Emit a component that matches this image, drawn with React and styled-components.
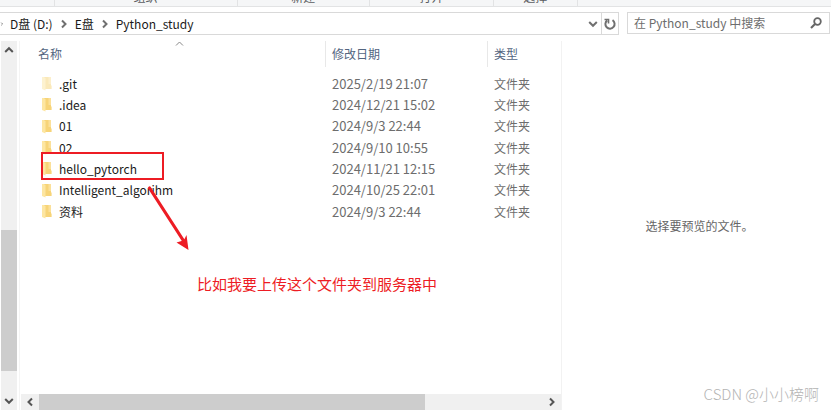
import React from 'react';
import styled, { createGlobalStyle } from 'styled-components';

const GlobalStyle = createGlobalStyle`
    * {
        box-sizing: border-box;
    }
    body {
        margin: 0;
        background: #fff;
        color: #1a1a1a;
        font-family: "Noto Sans CJK SC", "Noto Sans", sans-serif;
        font-size: 12px;
        line-height: 20px;
    }
    button, input {
        font: inherit;
        color: inherit;
        background: none;
        border: 0;
        padding: 0;
        margin: 0;
    }
`;

const Janela = styled.div`
    display: flex;
    flex-direction: column;
    height: 100vh;
    overflow: hidden;
    position: relative;
`;

const Ribbon = styled.div`
    display: flex;
    align-items: flex-end;
    height: 7px;
    flex: none;
    overflow: hidden;
    background: #f5f6f7;
    border-bottom: 1px solid #e2e3e4;
`;

const RibbonGrupo = styled.div`
    flex: ${props => props.$peso} 1 0;
    height: 18px;
    border-right: 1px solid #e2e3e4;
    color: #5a5d61;
    line-height: 18px;
    text-align: center;

    &:last-child {
        border-right: 0;
    }
`;

const BarraEndereco = styled.div`
    display: flex;
    flex: none;
    gap: 8px;
    padding: 5px 1px 6px 0;
`;

const Endereco = styled.nav`
    display: flex;
    align-items: center;
    flex: 1;
    height: 23px;
    border: 1px solid #d9d9d9;
    border-left: 0;
`;

const Pasta = styled.button`
    padding: 0 6px;
    white-space: nowrap;
`;

const BotaoSeta = styled.button`
    display: flex;
    align-items: center;
    justify-content: center;
    width: ${props => props.$largura}px;
    height: 21px;
    margin-left: ${props => (props.$fim ? 'auto' : 0)};
    border-left: ${props => (props.$borda ? '1px solid #d9d9d9' : '0')};
    color: #707070;
`;

const Busca = styled.label`
    display: flex;
    align-items: center;
    width: 203px;
    height: 22px;
    padding: 0 7px 0 6px;
    border: 1px solid #d9d9d9;
    color: #666;

    input {
        flex: 1;
        min-width: 0;
        outline: none;
    }
    input::placeholder {
        color: #6d6d6d;
        opacity: 1;
    }
`;

const Corpo = styled.div`
    display: flex;
    flex: 1;
    min-height: 0;
`;

const LateralRolagem = styled.div`
    display: flex;
    flex: none;
    width: 20px;
    padding: 0 3px 0 1px;
    border-right: 1px solid #f4f4f4;
`;

const Rolagem = styled.div`
    display: flex;
    flex: 1;
    flex-direction: ${props => (props.$vertical ? 'column' : 'row')};
    background: #f0f0f0;
`;

const BotaoRolagem = styled.button`
    display: flex;
    align-items: center;
    justify-content: center;
    flex: none;
    width: ${props => (props.$vertical ? '16px' : '18px')};
    height: ${props => (props.$vertical ? '18px' : '16px')};
    color: #555;
`;

const Trilho = styled.div`
    flex: ${props => props.$peso} 1 0;
    background: ${props => (props.$ativo ? '#cdcdcd' : 'transparent')};
`;

const PainelArquivos = styled.main`
    position: relative;
    display: flex;
    flex-direction: column;
    justify-content: space-between;
    flex: 540 1 0;
    padding-left: 1px;
    border-right: 1px solid #f2f2f2;
`;

const RodapeRolagem = styled.div`
    display: flex;
    height: 16px;
`;

const Tabela = styled.table`
    width: 100%;
    table-layout: fixed;
    border-collapse: separate;
    border-spacing: 0;

    th, td {
        padding: 0 0 0 6px;
        text-align: left;
        font-weight: normal;
        white-space: nowrap;
    }
    th:first-child {
        padding-left: 17px;
    }
    td:first-child {
        padding-left: 21px;
    }
    tbody::before {
        content: '';
        display: block;
        height: 6px;
    }
`;

const Coluna = styled.th`
    position: relative;
    width: ${props => props.$largura};
    height: 26px;
    border-right: ${props => (props.$ultima ? '0' : '1px solid #e8e8e8')};
    color: #53657f;
`;

const Ordem = styled.svg`
    position: absolute;
    top: 0;
    left: 50%;
    margin-left: 2px;
`;

const Linha = styled.tr`
    height: 21px;
    color: #6d6d6d;

    &:nth-child(3n) {
        height: 22px;
    }
`;

const Nome = styled.div`
    display: flex;
    align-items: center;
    gap: 7px;
    color: #1a1a1a;
`;

const Data = styled.td`
    font-size: 13px;
`;

const Previa = styled.aside`
    display: flex;
    flex: 263 1 0;
    align-items: center;
    justify-content: center;
    padding-left: 6px;
    color: #666;
`;

const Destaque = styled.div`
    position: absolute;
    top: 111px;
    left: 21px;
    width: 123px;
    height: 28px;
    border: 2px solid #ed1c24;
`;

const Flecha = styled.svg`
    position: absolute;
    top: 144px;
    left: 126px;
`;

const Recado = styled.p`
    position: absolute;
    top: 233px;
    left: 177px;
    margin: 0;
    color: #ed1c24;
    font-size: 15px;
    white-space: nowrap;
`;

const Marca = styled.div`
    position: absolute;
    right: 12px;
    bottom: 6px;
    color: #b4b4b4;
    font-size: 15px;
    font-weight: 300;
    white-space: pre;
`;

const direcoes = {
    direita: 'M3 1.5 L6.5 5 L3 8.5',
    esquerda: 'M7 1.5 L3.5 5 L7 8.5',
    cima: 'M1.2 7 L5 3.2 L8.8 7',
    baixo: 'M1.2 3 L5 6.8 L8.8 3'
};

const Seta = ({ para }) => (
    <svg width="10" height="10" viewBox="0 0 10 10" fill="none" stroke="currentColor" strokeWidth="2" aria-hidden="true">
        <path d={direcoes[para]} />
    </svg>
);

const IconePasta = ({ oculta }) => (
    <svg width="10" height="15" viewBox="0 0 10 15" opacity={oculta ? 0.5 : 1} aria-hidden="true">
        <path d="M1.5 1 H9 V9 L9.6 10 V13 H1.5 Z" fill="#f7d478" />
        <path d="M6.5 1 H9 V8 H6.5 Z" fill="#fbe09a" />
        <path d="M0 1 H2 L3.5 2.5 V14.5 L0 13 Z" fill="#fde6a2" />
    </svg>
);

const grupos = [
    { nome: '', peso: 54 },
    { nome: '组织', peso: 183 },
    { nome: '新建', peso: 132 },
    { nome: '打开', peso: 124 },
    { nome: '选择', peso: 83 },
    { nome: '', peso: 255 }
];

const caminho = ['D盘 (D:)', 'E盘', 'Python_study'];

const arquivos = [
    { nome: '.git', data: '2025/2/19 21:07', oculta: true },
    { nome: '.idea', data: '2024/12/21 15:02' },
    { nome: '01', data: '2024/9/3 22:44' },
    { nome: '02', data: '2024/9/10 10:55' },
    { nome: 'hello_pytorch', data: '2024/11/21 12:15' },
    { nome: 'Intelligent_algorihm', data: '2024/10/25 22:01' },
    { nome: '资料', data: '2024/9/3 22:44' }
];

class Explorador extends React.Component {
    constructor(props) {
        super(props);

        this.state = {
            busca: ''
        };
    }

    controleBusca = event => {
        this.setState({
            busca: event.target.value
        });
    };

    render() {
        return (
            <Janela>
                <GlobalStyle />
                <Ribbon>
                    {grupos.map((grupo, i) => (
                        <RibbonGrupo key={i} $peso={grupo.peso}>{grupo.nome}</RibbonGrupo>
                    ))}
                </Ribbon>
                <BarraEndereco>
                    <Endereco>
                        {caminho.map((pasta, i) => (
                            <React.Fragment key={pasta}>
                                <BotaoSeta $largura={i === 0 ? 4 : 10} aria-label="展开">
                                    <Seta para="direita" />
                                </BotaoSeta>
                                <Pasta>{pasta}</Pasta>
                            </React.Fragment>
                        ))}
                        <BotaoSeta $largura={16} $fim aria-label="历史记录">
                            <Seta para="baixo" />
                        </BotaoSeta>
                        <BotaoSeta $largura={17} $borda aria-label="刷新">
                            <svg width="12" height="12" viewBox="0 0 12 12" fill="none" stroke="currentColor" strokeWidth="2" aria-hidden="true">
                                <path d="M8.5 2.2 A4.6 4.6 0 1 1 3.2 2.4" />
                                <path d="M0.5 1.5 H4.5 V5.5" strokeWidth="1.6" />
                            </svg>
                        </BotaoSeta>
                    </Endereco>
                    <Busca>
                        <input
                            aria-label="搜索"
                            placeholder="在 Python_study 中搜索"
                            value={this.state.busca}
                            onChange={this.controleBusca}
                        />
                        <svg width="12" height="12" viewBox="0 0 12 12" fill="none" stroke="currentColor" aria-hidden="true">
                            <circle cx="7.5" cy="4.5" r="3.3" strokeWidth="1.8" />
                            <path d="M5 7 L1 11" strokeWidth="2.2" />
                        </svg>
                    </Busca>
                </BarraEndereco>
                <Corpo>
                    <LateralRolagem>
                        <Rolagem $vertical>
                            <BotaoRolagem $vertical aria-label="向上"><Seta para="cima" /></BotaoRolagem>
                            <Trilho $peso={171} />
                            <Trilho $peso={141} $ativo />
                            <Trilho $peso={21} />
                            <BotaoRolagem $vertical aria-label="向下"><Seta para="baixo" /></BotaoRolagem>
                        </Rolagem>
                    </LateralRolagem>
                    <PainelArquivos>
                        <Tabela>
                            <thead>
                                <tr>
                                    <Coluna $largura="auto">
                                        <button>名称</button>
                                        <Ordem width="9" height="6" viewBox="0 0 9 6" fill="none" stroke="#888" aria-hidden="true">
                                            <path d="M1 4.5 L4.5 1 L8 4.5" />
                                        </Ordem>
                                    </Coluna>
                                    <Coluna $largura="162px"><button>修改日期</button></Coluna>
                                    <Coluna $largura="73px" $ultima><button>类型</button></Coluna>
                                </tr>
                            </thead>
                            <tbody>
                                {arquivos.map(arquivo => (
                                    <Linha key={arquivo.nome}>
                                        <td>
                                            <Nome>
                                                <IconePasta oculta={arquivo.oculta} />
                                                {arquivo.nome}
                                            </Nome>
                                        </td>
                                        <Data>{arquivo.data}</Data>
                                        <td>文件夹</td>
                                    </Linha>
                                ))}
                            </tbody>
                        </Tabela>
                        <RodapeRolagem>
                            <Rolagem>
                                <BotaoRolagem aria-label="向左"><Seta para="esquerda" /></BotaoRolagem>
                                <Trilho $peso={386} $ativo />
                                <Trilho $peso={118} />
                                <BotaoRolagem aria-label="向右"><Seta para="direita" /></BotaoRolagem>
                            </Rolagem>
                        </RodapeRolagem>
                        <Destaque />
                        <Flecha width="44" height="66" viewBox="0 0 44 66" aria-hidden="true">
                            <path d="M3.5 3 L37 55" stroke="#ed1c24" strokeWidth="3.2" strokeLinecap="round" />
                            <path d="M42.5 65 L30.5 57.5 L35.5 56 L38.5 54 L40.5 50 Z" fill="#ed1c24" />
                        </Flecha>
                        <Recado>比如我要上传这个文件夹到服务器中</Recado>
                    </PainelArquivos>
                    <Previa>选择要预览的文件。</Previa>
                </Corpo>
                <Marca>CSDN @小小榜啊</Marca>
            </Janela>
        );
    }
}

export default Explorador;
